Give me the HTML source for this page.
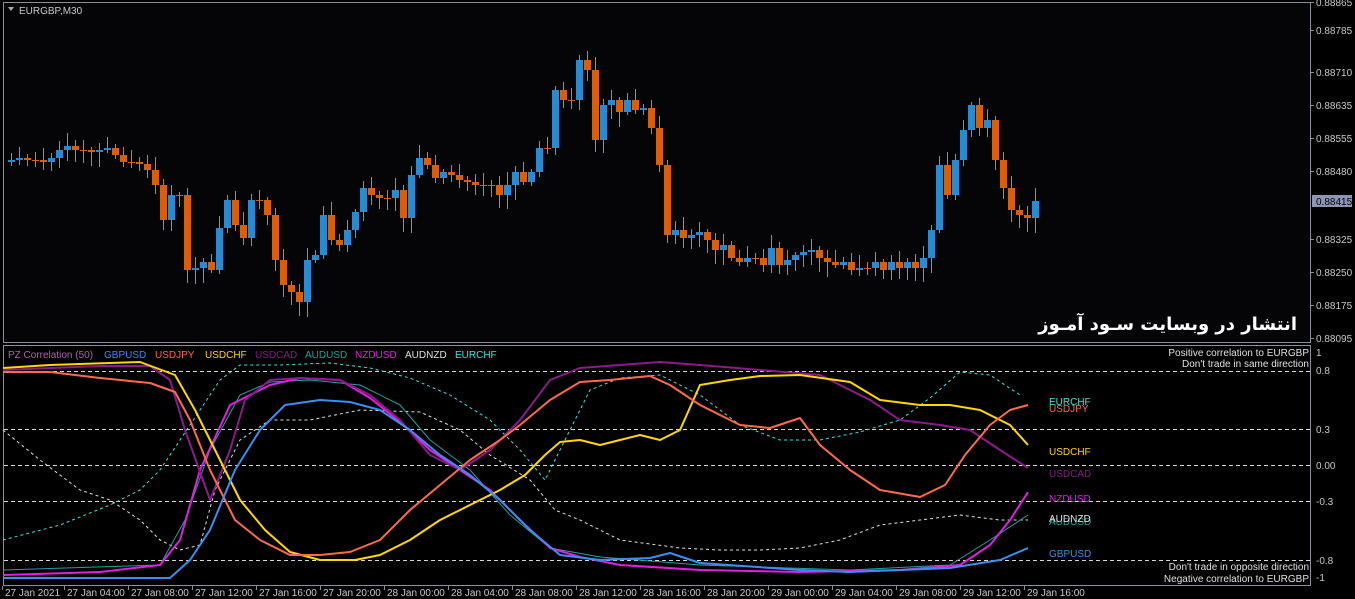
<!DOCTYPE html>
<html><head><meta charset="utf-8"><style>
body{margin:0;background:#000;width:1355px;height:599px;overflow:hidden;font-family:"Liberation Sans","DejaVu Sans",sans-serif;position:relative}
svg{position:absolute;left:0;top:0}
#fa{position:absolute;right:58px;top:312px;color:#fff;font-size:18px;font-weight:bold;direction:rtl;white-space:nowrap;font-family:"DejaVu Sans","Noto Sans CJK SC",sans-serif;line-height:26px}
</style></head><body>
<svg id="s" width="1355" height="599" xmlns="http://www.w3.org/2000/svg" font-family="Liberation Sans, DejaVu Sans, sans-serif">
<rect width="1355" height="599" fill="#000"/>
<rect x="3.5" y="2.5" width="1307" height="340" fill="#050508" stroke="#8a8f99"/>
<rect x="3.5" y="345.5" width="1307" height="240" fill="#000" stroke="#8a8f99"/>
<g id="cd"></g>
<g stroke="#d8d8d8" stroke-dasharray="4,3" stroke-width="1">
<line x1="4" x2="1310" y1="371.5" y2="371.5"/><line x1="4" x2="1310" y1="429.5" y2="429.5"/>
<line x1="4" x2="1310" y1="465.5" y2="465.5"/><line x1="4" x2="1310" y1="501.5" y2="501.5"/>
<line x1="4" x2="1310" y1="560.5" y2="560.5"/></g>
<g id="ln" fill="none" stroke-width="2" stroke-linejoin="round"></g>
<path d="M8 7 l6 0 l-3 4z" fill="#aaa"/>
<text x="19" y="14" fill="#c8c8c8" font-size="10">EURGBP,M30</text>
<g font-size="10" fill="#c8c8c8" id="ax"></g>
<rect x="1312" y="195" width="40" height="12" fill="#8c96b4"/>
<text x="1316" y="205" font-size="10" fill="#000">0.88415</text>
<g font-size="10">
<text x="8" y="358" fill="#b060b0">PZ Correlation (50)</text>
<text x="104" y="358" fill="#3a8ef0">GBPUSD</text>
<text x="155" y="358" fill="#ff6a4a">USDJPY</text>
<text x="205" y="358" fill="#ffd700">USDCHF</text>
<text x="255" y="358" fill="#8b1a8b">USDCAD</text>
<text x="305" y="358" fill="#20a0a0">AUDUSD</text>
<text x="355" y="358" fill="#e020e0">NZDUSD</text>
<text x="405" y="358" fill="#e0e0e0">AUDNZD</text>
<text x="455" y="358" fill="#40e0e0">EURCHF</text>
<text x="1049" y="405" fill="#40e0e0">EURCHF</text>
<text x="1049" y="412" fill="#ff6a4a">USDJPY</text>
<text x="1049" y="455" fill="#ffd700">USDCHF</text>
<text x="1049" y="477" fill="#8b1a8b">USDCAD</text>
<text x="1049" y="502" fill="#e020e0">NZDUSD</text>
<text x="1049" y="525" fill="#20a0a0">AUDUSD</text>
<text x="1049" y="522" fill="#e0e0e0">AUDNZD</text>
<text x="1049" y="557" fill="#3a8ef0">GBPUSD</text>
<g fill="#e0e0e0" text-anchor="end">
<text x="1309" y="356">Positive correlation to EURGBP</text>
<text x="1309" y="367">Don't trade in same direction</text>
<text x="1309" y="570">Don't trade in opposite direction</text>
<text x="1309" y="582">Negative correlation to EURGBP</text></g>
<g fill="#c8c8c8">
<text x="1316" y="356">1</text><text x="1316" y="374">0.8</text><text x="1316" y="433">0.3</text>
<text x="1316" y="469">0.00</text><text x="1316" y="505">-0.3</text><text x="1316" y="564">-0.8</text><text x="1316" y="581">-1</text></g>
</g>
<g id="tm" font-size="10" fill="#c8c8c8"></g>
</svg>
<div id="fa">انتشار در وبسایت سـود آمـوز</div>
<script>
var NS="http://www.w3.org/2000/svg";
function el(p,t,a){var e=document.createElementNS(NS,t);for(var k in a)e.setAttribute(k,a[k]);p.appendChild(e);return e;}
var c=[162,160,158,160,160,162,158,150,146,150,150,152,150,148,155,162,162,164,170,185,220,195,195,270,268,262,270,228,200,225,238,200,200,215,260,285,292,302,260,255,215,240,245,230,212,188,195,198,198,190,218,175,158,165,178,172,175,180,182,185,185,185,195,185,172,182,172,148,148,90,100,100,60,70,140,105,100,112,100,110,108,128,165,235,230,238,235,232,240,250,245,258,262,258,258,265,248,265,260,255,252,250,258,262,265,262,270,268,268,262,270,262,268,262,268,258,230,165,195,160,130,105,128,120,160,188,210,215,218,201];
var g=document.getElementById("cd");
for(var i=1;i<c.length;i++){var x=8+(i-1)*8,o=c[i-1],cl=c[i];var up=cl<o;var col=up?"#2a8ad0":"#d8600c";
var t=Math.min(o,cl),b=Math.max(o,cl);var h=(i*37%11)+3,l=(i*53%13)+3;
el(g,"line",{x1:x+3.5,x2:x+3.5,y1:t-h,y2:b+l,stroke:"#8a8f99"});
el(g,"rect",{x:x,y:t,width:7,height:Math.max(1,b-t),fill:col});}
var L=[
["#40e0e0",1,"3,3","3,540 60,525 110,505 140,490 160,470 180,440 200,410 220,380 240,365 280,365 330,363 370,368 410,378 450,395 490,420 520,450 545,480 565,440 590,390 620,378 660,375 700,395 740,425 780,440 820,440 860,432 900,420 930,398 960,372 990,375 1020,395"],
["#e0e0e0",1,"3,3","3,430 40,460 80,490 110,500 140,520 160,540 180,550 200,545 215,490 240,440 270,420 310,420 360,410 420,412 460,430 490,455 530,480 555,510 580,520 620,540 680,548 720,550 760,550 800,548 840,540 880,525 920,520 960,515 1000,520 1028,520"],
["#20a0a0",1,"","3,570 160,565 185,520 210,450 240,395 270,382 310,380 360,385 400,405 430,440 470,470 510,515 550,548 600,557 700,565 850,570 950,565 990,540 1028,515"],
["#e020e0",2,"","3,575 100,572 160,565 180,540 200,470 230,405 250,395 270,385 300,378 340,380 370,398 400,422 430,450 460,470 490,490 520,520 550,548 580,557 620,565 700,570 800,572 900,570 960,565 990,545 1010,520 1028,492"],
["#8b1a8b",2,"","3,370 100,366 150,366 170,380 185,430 210,500 230,450 245,400 270,380 300,378 340,380 370,395 400,420 430,455 460,470 490,450 520,420 550,380 580,368 620,365 660,362 700,365 760,370 820,375 870,400 900,420 940,425 970,430 1000,450 1028,468"],
["#ffd700",2,"","3,368 50,365 140,362 175,375 195,410 215,450 240,500 265,530 290,552 320,560 355,560 380,555 410,540 440,520 470,505 500,490 525,475 545,455 560,442 580,440 600,445 620,440 640,435 660,440 680,430 700,385 730,380 760,376 800,375 850,382 880,400 920,405 950,405 980,410 1010,425 1028,445"],
["#ff6a4a",2,"","3,372 50,372 100,378 150,383 175,392 190,420 210,470 235,520 260,540 290,555 320,555 350,552 380,540 410,510 440,485 470,460 500,440 520,425 550,400 580,382 610,380 650,376 670,385 700,405 740,425 770,428 800,418 820,445 850,470 880,490 920,497 945,485 965,455 990,425 1010,410 1028,405"],
["#3a8ef0",2,"","3,578 170,578 190,560 210,530 235,470 260,430 285,405 320,400 350,402 380,410 410,430 440,455 470,475 500,500 530,530 560,555 600,560 650,558 670,553 700,563 800,570 850,572 950,568 1000,560 1028,548"]];
var lg=document.getElementById("ln");
L.forEach(function(a){var p=el(lg,"polyline",{points:a[3],stroke:a[0],"stroke-width":a[1]});if(a[2])p.setAttribute("stroke-dasharray",a[2]);});
var ax=document.getElementById("ax");
[["0.88865",6],["0.88785",34],["0.88710",76],["0.88635",109],["0.88555",142],["0.88480",175],["0.88325",243],["0.88250",276],["0.88175",309],["0.88095",342]].forEach(function(v){
el(ax,"line",{x1:1311,x2:1314,y1:v[1]-3.5,y2:v[1]-3.5,stroke:"#8a8f99"});var t=el(ax,"text",{x:1316,y:v[1]});t.textContent=v[0];});
var tm=document.getElementById("tm");
var T=["27 Jan 2021","27 Jan 04:00","27 Jan 08:00","27 Jan 12:00","27 Jan 16:00","27 Jan 20:00","28 Jan 00:00","28 Jan 04:00","28 Jan 08:00","28 Jan 12:00","28 Jan 16:00","28 Jan 20:00","29 Jan 00:00","29 Jan 04:00","29 Jan 08:00","29 Jan 12:00","29 Jan 16:00"];
T.forEach(function(s,i){var x=i==0?5:67+(i-1)*64;el(tm,"line",{x1:x-2.5,x2:x-2.5,y1:586,y2:590,stroke:"#8a8f99"});var t=el(tm,"text",{x:x,y:596});t.textContent=s;});
</script>
</body></html>
